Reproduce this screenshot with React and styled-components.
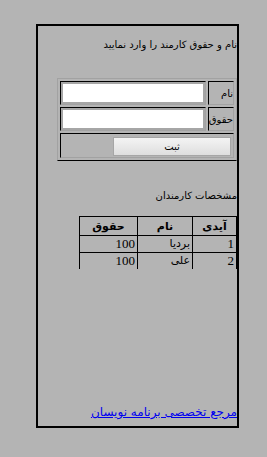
import React from 'react';
import styled, { createGlobalStyle } from 'styled-components';

const GlobalStyle = createGlobalStyle`
  html, body {
    margin: 0;
    padding: 0;
    background: #b4b4b4;
  }
  body {
    font-family: "DejaVu Sans", "Liberation Sans", sans-serif;
    color: #000;
  }
`;

const Frame = styled.div`
  box-sizing: content-box;
  width: 199px;
  height: 400px;
  margin: 24px 0 0 36px;
  border: 2px solid #000;
  direction: rtl;
  overflow: hidden;
  display: flex;
  flex-direction: column;
`;

const Caption = styled.p`
  margin: ${p => p.$top}px 0 0 0;
  font-size: 10px;
  line-height: 16px;
  white-space: nowrap;
`;

const FormTable = styled.table`
  margin-top: 25px;
  align-self: flex-start;
  border-collapse: separate;
  border-spacing: 2px;
  border-top: 1px solid #a2a2a2;
  border-right: 1px solid #a2a2a2;
  border-left: 1px solid #a2a2a2;
  border-bottom: 1px solid #000;
`;

const FormCell = styled.td`
  padding: 0;
  border-top: 1px solid #000;
  border-left: 1px solid #000;
  border-bottom: 1px solid #a2a2a2;
  border-right: 1px solid #a2a2a2;
  font-size: 10px;
  white-space: nowrap;
  text-align: right;
  height: ${p => p.$h || 22}px;
  vertical-align: middle;
`;

const TextInput = styled.input`
  display: block;
  box-sizing: border-box;
  width: 144px;
  height: 22px;
  margin: 0;
  border: 2px solid #a6a6a6;
  background: #fff;
  outline: none;
`;

const SubmitButton = styled.button`
  display: block;
  box-sizing: border-box;
  width: 118px;
  height: 19px;
  margin: 2px 2px 1px 0;
  padding: 0;
  border: 1px solid #a6a6a6;
  background: linear-gradient(#f4f4f4, #dedede);
  font-family: inherit;
  font-size: 10px;
  color: #000;
`;

const DataTable = styled.table`
  margin-top: 12px;
  align-self: flex-start;
  border-collapse: collapse;
  font-size: 11px;
`;

const HeadCell = styled.th`
  width: ${p => p.$w}px;
  height: 18px;
  padding: 0 2px;
  border: 1px solid #000;
  font-weight: bold;
  text-align: center;
`;

const BodyCell = styled.td`
  height: 16px;
  padding: 0 2px 0 1px;
  border-left: 1px solid #000;
  border-right: 1px solid #000;
  border-bottom: ${p => (p.$last ? 'none' : '1px solid #000')};
  text-align: right;
  font-family: ${p => (p.$num ? '"Liberation Serif", serif' : 'inherit')};
  font-size: ${p => (p.$num ? '13px' : '11px')};
  line-height: 16px;
`;

const FooterLink = styled.a`
  margin-top: auto;
  margin-bottom: 6px;
  align-self: flex-start;
  color: #0000ee;
  font-size: 12px;
  line-height: 16px;
  white-space: nowrap;
`;

const employees = [
  { id: 1, name: 'بردیا', salary: 100 },
  { id: 2, name: 'علی', salary: 100 },
];

export default function App() {
  return (
    <>
      <GlobalStyle />
      <Frame>
        <Caption $top={11}>نام و حقوق کارمند را وارد نمایید</Caption>
        <FormTable>
          <tbody>
            <tr>
              <FormCell>نام</FormCell>
              <FormCell>
                <TextInput type="text" />
              </FormCell>
            </tr>
            <tr>
              <FormCell>حقوق</FormCell>
              <FormCell>
                <TextInput type="text" />
              </FormCell>
            </tr>
            <tr>
              <FormCell colSpan={2} $h={23}>
                <SubmitButton type="button">ثبت</SubmitButton>
              </FormCell>
            </tr>
          </tbody>
        </FormTable>
        <Caption $top={27}>مشخصات کارمندان</Caption>
        <DataTable>
          <thead>
            <tr>
              <HeadCell $w={39}>آیدی</HeadCell>
              <HeadCell $w={50}>نام</HeadCell>
              <HeadCell $w={53}>حقوق</HeadCell>
            </tr>
          </thead>
          <tbody>
            {employees.map((e, i) => (
              <tr key={e.id}>
                <BodyCell $num $last={i === employees.length - 1}>{e.id}</BodyCell>
                <BodyCell $last={i === employees.length - 1}>{e.name}</BodyCell>
                <BodyCell $num $last={i === employees.length - 1}>{e.salary}</BodyCell>
              </tr>
            ))}
          </tbody>
        </DataTable>
        <FooterLink href="#">مرجع تخصصی برنامه نویسان</FooterLink>
      </Frame>
    </>
  );
}
